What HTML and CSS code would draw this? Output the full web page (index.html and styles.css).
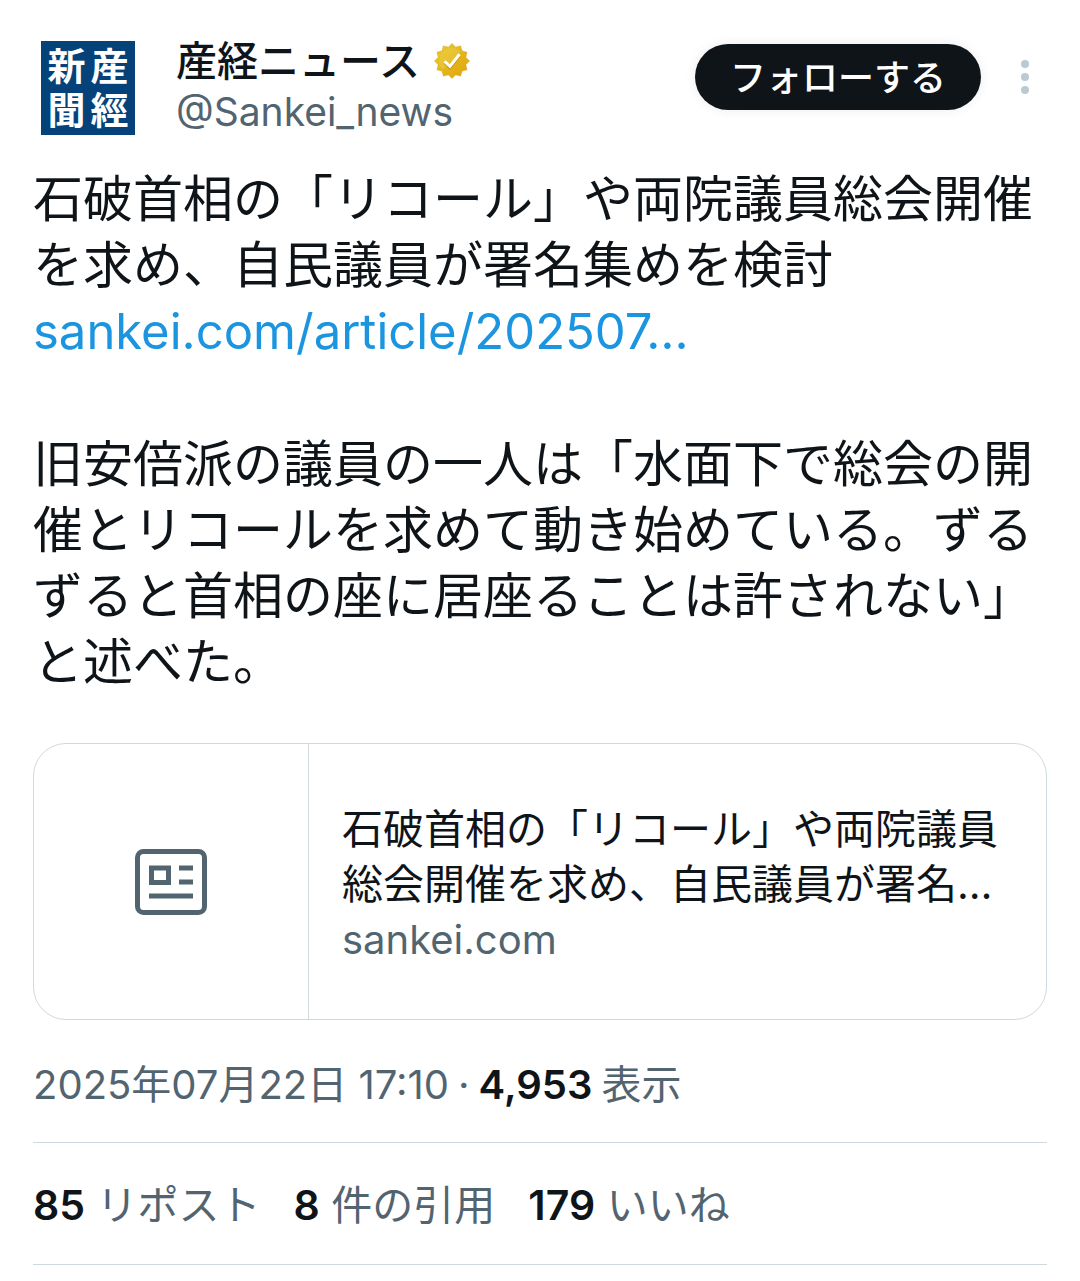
FILE: index.html
```html
<!DOCTYPE html>
<html lang="ja">
<head>
  <meta charset="UTF-8" />
  <meta name="viewport" content="width=device-width, initial-scale=1" />
  <title>産経ニュース</title>
  <link rel="stylesheet" href="styles.css">
</head>
<body>

  <article class="post">
    <header class="post-header">
      <a class="avatar" href="#">
        <span>新</span><span>産</span>
        <span>聞</span><span>經</span>
      </a>
      <div class="author">
        <div class="name-row">
          <a class="name" href="#">産経ニュース</a>
          <svg class="badge" viewBox="0 0 36 36" aria-hidden="true">
            <defs>
              <linearGradient id="gold" x1="0" y1="0" x2="1" y2="1">
                <stop offset="0" stop-color="#ecd02c" />
                <stop offset="0.5" stop-color="#e2b719" />
                <stop offset="1" stop-color="#e0a312" />
              </linearGradient>
            </defs>
            <path fill="url(#gold)" stroke="#d9980c" stroke-width="0.5" d="M18 .5l3.6 3.7 5-1.3 1.4 5 5 1.4-1.3 5L35.5 18l-3.8 3.7 1.3 5-5 1.4-1.4 5-5-1.3L18 35.5l-3.6-3.7-5 1.3-1.4-5-5-1.4 1.3-5L.5 18l3.8-3.7-1.3-5 5-1.4 1.4-5 5 1.3z" />
            <path fill="#ebc94e" opacity="0.5" d="M18 5a13 13 0 0 0-9.500 21.800L26.800 8.500A13 13 0 0 0 18 5z" />
            <path fill="none" stroke="#cf8c05" stroke-width="3" d="M10.500 19.500l5.500 5 9.500-12" />
            <path fill="none" stroke="#fff" stroke-width="3" d="M10.500 18.300l5.500 5 9.500-12" />
          </svg>
        </div>
        <a class="handle" href="#">@Sankei_news</a>
      </div>
      <button class="follow" type="button">フォローする</button>
      <button class="more" type="button" aria-label="もっと見る">
        <svg viewBox="0 0 8 34" aria-hidden="true">
          <circle cx="4" cy="4" r="4" />
          <circle cx="4" cy="17" r="4" />
          <circle cx="4" cy="30" r="4" />
        </svg>
      </button>
    </header>

    <div class="post-text">
      <p>石破首相の「リコール」や両院議員総会開催を求め、自民議員が署名集めを検討<br><a href="#">sankei.com/article/202507…</a></p>
      <p>旧安倍派の議員の一人は「水面下で総会の開催とリコールを求めて動き始めている。ずるずると首相の座に居座ることは許されない」と述べた。</p>
    </div>

    <a class="card" href="#">
      <div class="card-thumb">
        <svg viewBox="0 0 72 66" aria-hidden="true">
          <rect x="2.500" y="2.500" width="67" height="61" rx="6" />
          <path d="M16.500 19h17v14.500h-17zM44 19h14M44 33h14M14 47h44" />
        </svg>
      </div>
      <div class="card-body">
        <div class="card-title">石破首相の「リコール」や両院議員総会開催を求め、自民議員が署名…</div>
        <div class="card-domain">sankei.com</div>
      </div>
    </a>

    <div class="meta">
      <time datetime="2025-07-22T17:10">2025年07月22日 17:10</time>
      <span>·</span>
      <strong>4,953</strong>
      <span>表示</span>
    </div>

    <div class="stats">
      <a href="#"><strong>85</strong> リポスト</a>
      <a href="#"><strong>8</strong> 件の引用</a>
      <a href="#"><strong>179</strong> いいね</a>
    </div>
  </article>

</body>
</html>
```
FILE: styles.css
```css
body {
  margin: 0;
  background: #fff;
  color: #0f1419;
  font-family: Inter, "Noto Sans CJK JP", sans-serif;
  font-size: 41px;
}
a {
  color: inherit;
  text-decoration: none;
}
button {
  border: 0;
  padding: 0;
  font: inherit;
  cursor: pointer;
}
.post {
  padding: 36px 33px 16px;
}
.post-header {
  display: flex;
  align-items: flex-start;
  margin-bottom: 26px;
}
.avatar {
  display: grid;
  grid-template-columns: 1fr 1fr;
  box-sizing: border-box;
  width: 94px;
  height: 94px;
  margin: 5px 41px 5px 8px;
  padding: 3px 4px;
  background: #06427a;
  color: #fff;
  font-size: 38px;
  font-weight: 700;
  line-height: 44px;
  text-align: center;
}
.author {
  flex: 1;
  line-height: 50px;
}
.name-row {
  display: flex;
  align-items: center;
}
.name {
  font-weight: 500;
}
.badge {
  width: 36px;
  height: 36px;
  margin-left: 14px;
}
.handle,
.card-domain,
.meta,
.stats {
  color: #536471;
}
.handle {
  font-size: 39px;
}
.follow {
  height: 66px;
  margin-top: 8px;
  padding: 0 35px 4px;
  border-radius: 33px;
  background: #0f1419;
  box-shadow: 0 0 12px rgba(0, 0, 0, 0.08);
  color: #fff;
  font-size: 36px;
  font-weight: 500;
}
.more {
  width: 44px;
  height: 66px;
  margin: 8px 0 0 22px;
  background: none;
}
.more svg {
  display: block;
  height: 34px;
  margin: auto;
  fill: #b9cad3;
}
.post-text {
  font-size: 50px;
  line-height: 66px;
}
.post-text p {
  margin: 0 0 66px;
}
.post-text p:last-child {
  margin-bottom: 48px;
}
.post-text a {
  color: #1b95e0;
  font-size: 49px;
}
.card {
  display: flex;
  border: 1px solid #cfd9de;
  border-radius: 33px;
}
.card-thumb {
  display: flex;
  align-items: center;
  justify-content: center;
  width: 274px;
  height: 275px;
  border-right: 1px solid #cfd9de;
}
.card-thumb svg {
  width: 72px;
  height: 66px;
  fill: none;
  stroke: #536471;
  stroke-width: 5;
}
.card-body {
  flex: 1;
  align-self: center;
  padding: 5px 33px 0;
  line-height: 55px;
}
.card-title {
  color: #0f1419;
}
.card-domain {
  font-size: 40px;
}
.meta {
  display: flex;
  gap: 9px;
  padding: 37px 0 30px;
  border-bottom: 1px solid #cfd9de;
  font-size: 40px;
  line-height: 55px;
}
.meta strong,
.stats strong {
  color: #0f1419;
  font-weight: 600;
}
.stats {
  display: flex;
  flex-wrap: wrap;
  gap: 0 33px;
  padding: 35px 0 31px;
  border-bottom: 1px solid #cfd9de;
  line-height: 55px;
}
```
